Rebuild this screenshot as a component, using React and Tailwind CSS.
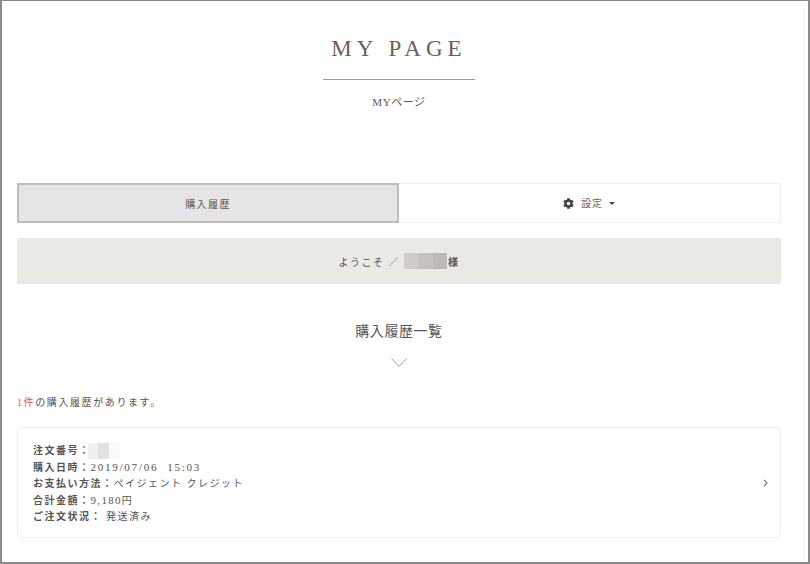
import React from "react";
import { FaCog } from "react-icons/fa";

const serif = '"Liberation Serif", "Noto Sans CJK JP", serif';

function Blur({ className, shades }) {
  return (
    <span className={`inline-flex align-middle ${className}`}>
      {shades.map((s) => (
        <span key={s} className={`h-full flex-1 ${s}`} />
      ))}
    </span>
  );
}

export default function App() {
  return (
    <div
      className="w-[810px] h-[564px] overflow-hidden bg-white border-l-2 border-b-2 border-r-2 border-t border-[#8a8a8a] text-[#444] pt-[4px]"
      style={{ fontFamily: serif }}
    >
      <div className="h-[554px] mr-[3px] border-r border-[#f3f3f3] pl-[15px] pr-[23px]">
        <header className="pt-[22px] flex flex-col items-center">
          <h1 className="text-[23px] leading-[44px] tracking-[0.22em] text-[#6a6058] font-normal">MY PAGE</h1>
          <div className="mt-[8px] w-[152px] h-px bg-[#a39a90]" />
          <p className="mt-[15px] text-[11px] leading-[15px] tracking-[0.05em] text-[#555]">MYページ</p>
        </header>

        <nav className="mt-[73px] grid grid-cols-2 h-[40px] text-[10px]">
          <div className="flex items-center justify-center pt-[2px] bg-[#e5e5e5] border-2 border-[#bdbdbd] text-[#555] tracking-[0.14em]">購入履歴</div>
          <div className="flex items-center justify-center pt-[1px] gap-[6px] border border-l-0 border-[#eeeeec] text-[#666] tracking-[0.08em]">
            <FaCog className="w-[11px] h-[11px] text-[#444] -ml-[1px]" />
            <span className="ml-[1px]">設定</span>
            <span className="w-0 h-0 border-x-[3px] border-x-transparent border-t-[3px] border-t-[#444]" />
          </div>
        </nav>

        <div className="mt-[15px] h-[46px] flex items-center justify-center bg-[#ebe9e4] text-[10px] tracking-[0.15em] text-[#555]">
          <span className="pt-[2px]">ようこそ ／</span>
          <Blur className="ml-[4px] w-[43px] h-[16px]" shades={["bg-[#cfccc7]", "bg-[#c6c3be]", "bg-[#bdbab5]"]} />
          <span className="pt-[2px] font-bold ml-[1px]">様</span>
        </div>

        <section className="mt-[38px] flex flex-col items-center">
          <h2 className="text-[14px] leading-[20px] font-normal tracking-[0.04em] text-[#555]">購入履歴一覧</h2>
          <svg className="mt-[16px]" width="16" height="10" viewBox="0 0 16 10" fill="none">
            <path d="M0.5 0.5 L8 8.5 L15.5 0.5" stroke="#a8a197" strokeWidth="1" />
          </svg>
        </section>

        <p className="mt-[28px] text-[10px] leading-[14px] tracking-[0.16em] text-[#555]">
          <span className="text-[#d9534f]">1件</span>の購入履歴があります。
        </p>

        <div className="mt-[17px] h-[111px] flex items-center justify-between rounded-[4px] border border-[#f0efec] pl-[15px] pr-[12px]">
          <div className="pt-[3px] text-[10px] leading-[16px] tracking-[0.15em] text-[#555]">
            <p className="flex items-center"><span className="font-bold">注文番号：</span><Blur className="-ml-[3px] w-[32px] h-[16px]" shades={["bg-[#f0f0f0]", "bg-[#e2e2e2]", "bg-[#fafafa]"]} /></p>
            <p><span className="font-bold">購入日時：</span><span className="text-[11px] tracking-[0.16em]">2019/07/06&nbsp; 15:03</span></p>
            <p><span className="font-bold">お支払い方法：</span>ペイジェント クレジット</p>
            <p><span className="font-bold">合計金額：</span><span className="text-[11px] tracking-[0.12em]">9,180</span>円</p>
            <p><span className="font-bold">ご注文状況：</span> 発送済み</p>
          </div>
          <svg width="5" height="8" viewBox="0 0 5 8" fill="none">
            <path d="M1 1 L4 4 L1 7" stroke="#777" strokeWidth="1.1" />
          </svg>
        </div>
      </div>
    </div>
  );
}
